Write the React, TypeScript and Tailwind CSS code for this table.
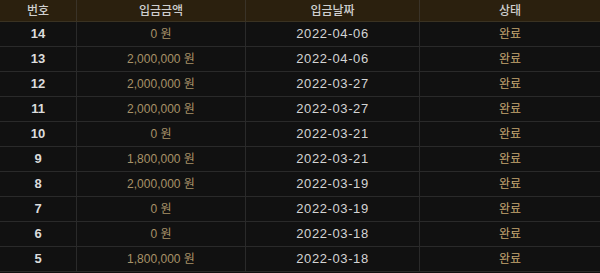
import React from "react";

const rows = [
  ["14", "0 원", "2022-04-06"],
  ["13", "2,000,000 원", "2022-04-06"],
  ["12", "2,000,000 원", "2022-03-27"],
  ["11", "2,000,000 원", "2022-03-27"],
  ["10", "0 원", "2022-03-21"],
  ["9", "1,800,000 원", "2022-03-21"],
  ["8", "2,000,000 원", "2022-03-19"],
  ["7", "0 원", "2022-03-19"],
  ["6", "0 원", "2022-03-18"],
  ["5", "1,800,000 원", "2022-03-18"],
];

const font = { fontFamily: '"Liberation Sans", "Noto Sans CJK KR", sans-serif' };

export default function App() {
  return (
    <div className="w-[600px] h-[273px] bg-[#111111] overflow-hidden" style={font}>
      <div className="grid grid-cols-[77px_169px_174px_180px] h-[22px] bg-[#2b200e] border-b border-[#3a3222] text-[12px] text-[#cfcfcf] font-medium">
        <div className="flex items-center justify-center border-r border-[#3a3328]">번호</div>
        <div className="flex items-center justify-center border-r border-[#3a3328]">입금금액</div>
        <div className="flex items-center justify-center border-r border-[#3a3328]">입금날짜</div>
        <div className="flex items-center justify-center">상태</div>
      </div>
      {rows.map((r) => (
        <div
          key={r[0]}
          className="grid grid-cols-[77px_169px_174px_180px] h-[25px] border-b border-[#2a2a2a] text-[13px]"
        >
          <div className="flex items-center justify-center border-r border-[#2a2a2a] text-[#dcdcdc] font-bold">{r[0]}</div>
          <div className="flex items-center justify-center border-r border-[#2a2a2a] text-[#a89268] text-[12px]">{r[1]}</div>
          <div className="flex items-center justify-center border-r border-[#2a2a2a] text-[#d4d4d4] tracking-[0.6px]">{r[2]}</div>
          <div className="flex items-center justify-center text-[#c6a772] text-[12px]">완료</div>
        </div>
      ))}
    </div>
  );
}
